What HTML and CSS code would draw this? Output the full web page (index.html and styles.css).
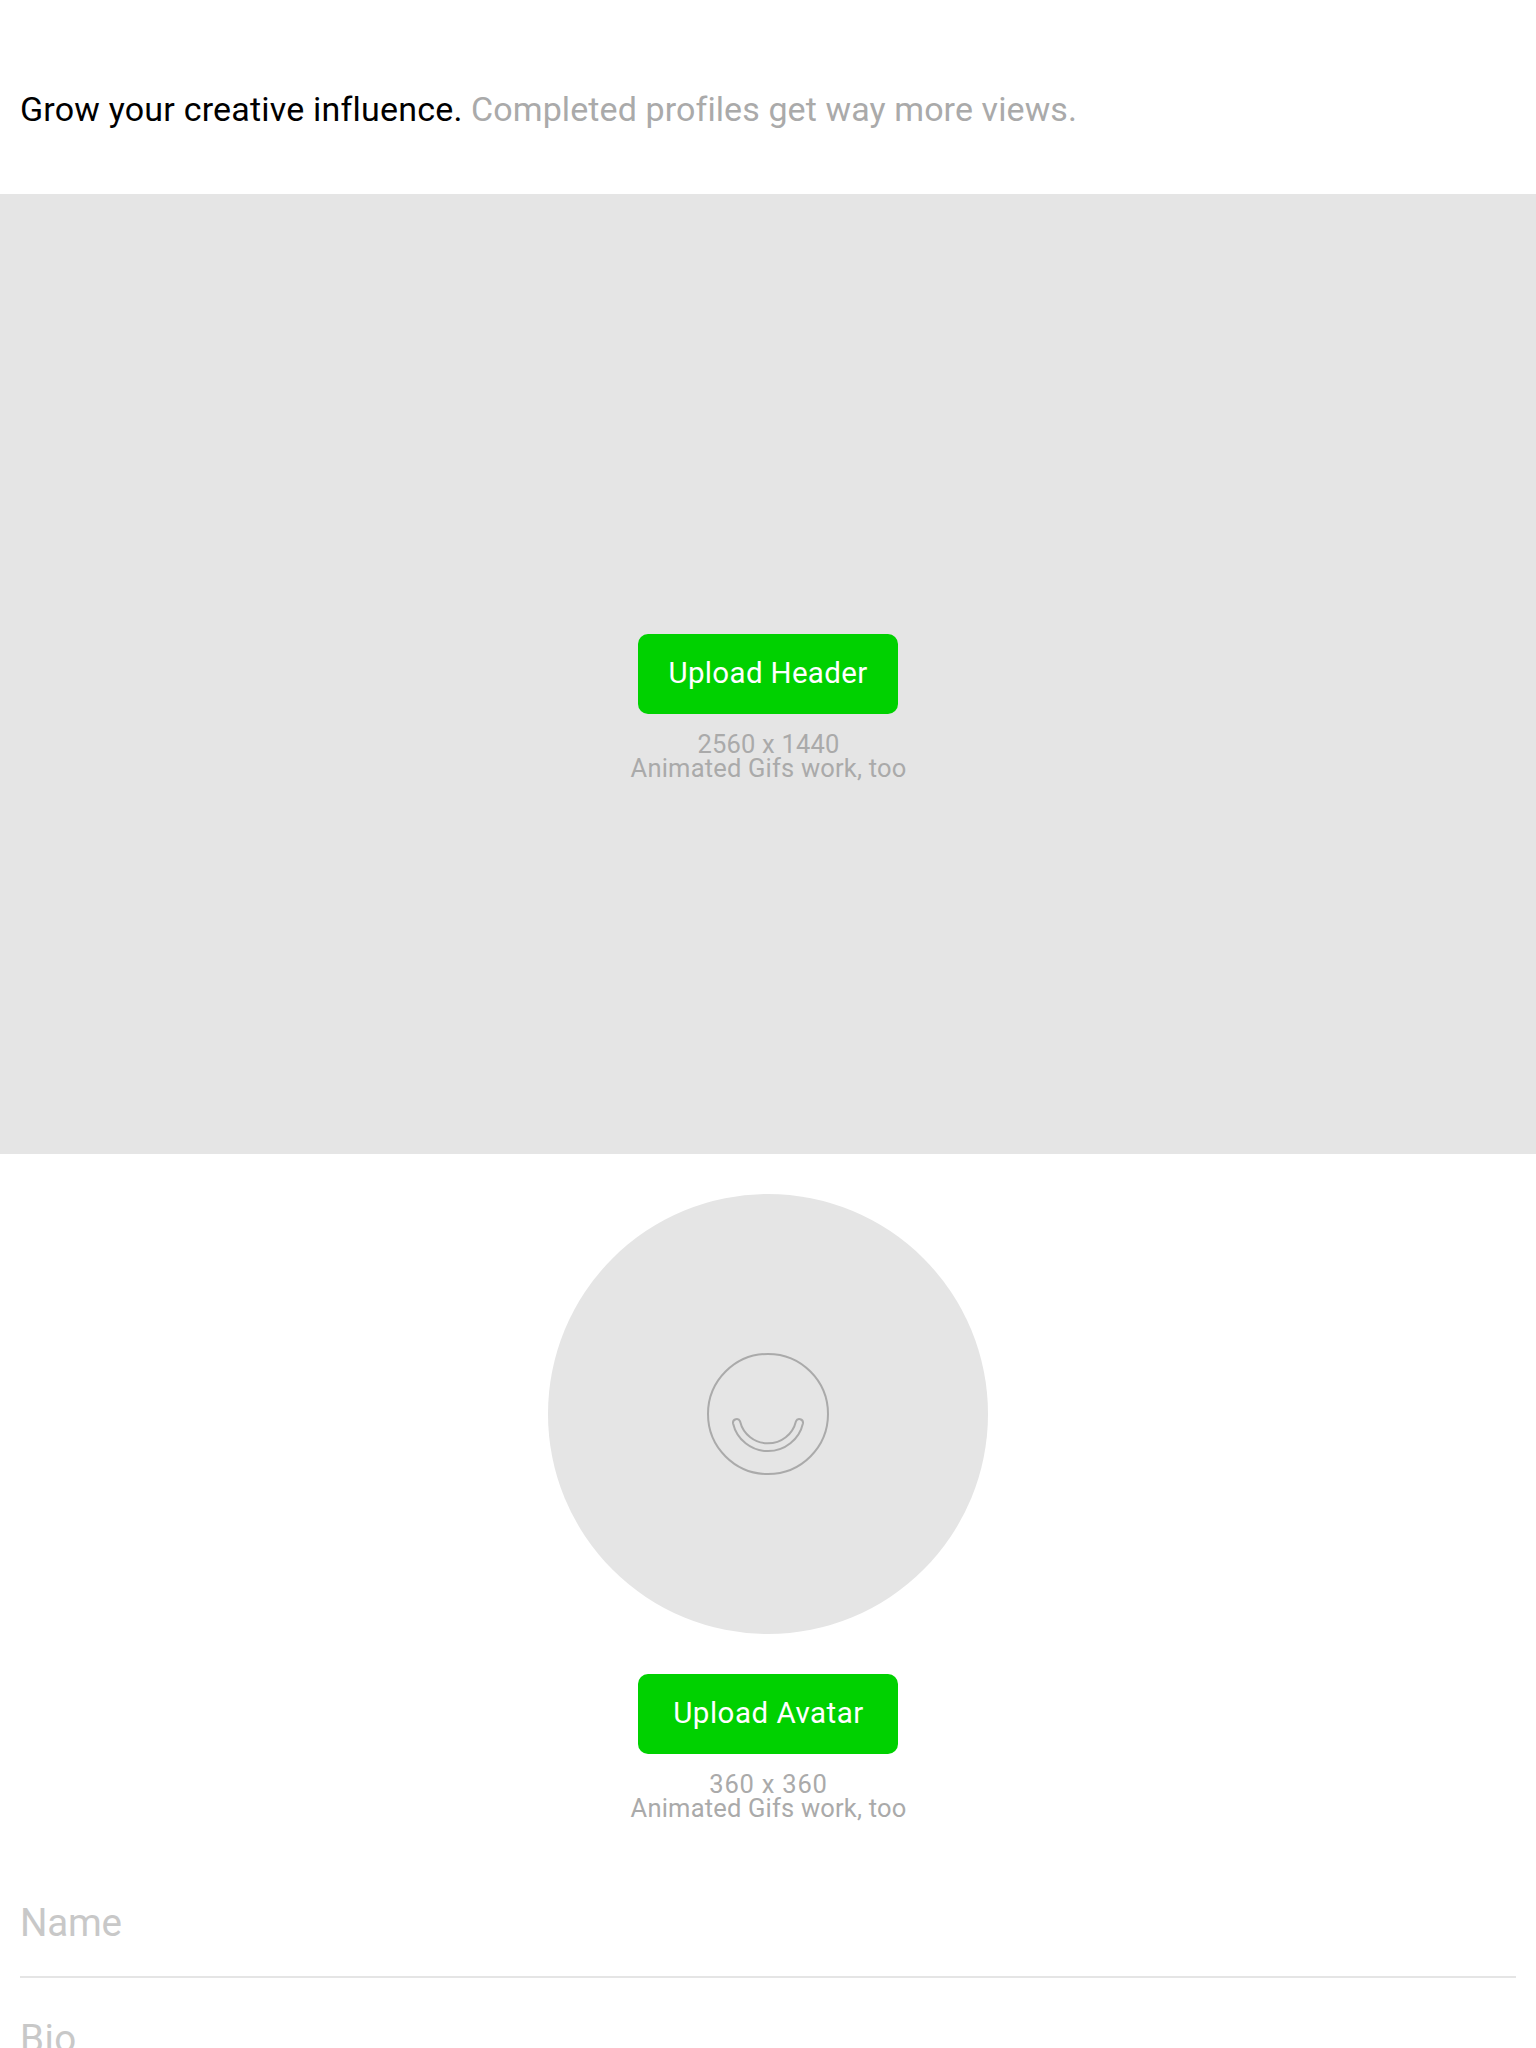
FILE: index.html
```html
<!DOCTYPE html>
<html lang="en">
<head>
<meta charset="utf-8">
<title>Complete your profile</title>
<link rel="stylesheet" href="styles.css">
</head>
<body>
<main class="page">
  <h1 class="intro"><span class="intro-lead">Grow your creative influence.</span> <span class="intro-note">Completed profiles get way more views.</span></h1>
  <section class="cover">
    <button class="upload upload-header" type="button">Upload Header</button>
    <p class="hint"><span class="hint-size">2560 x 1440</span><br>Animated Gifs work, too</p>
  </section>
  <section class="profile">
    <div class="avatar">
      <svg class="face" viewBox="0 0 122 122" aria-hidden="true">
        <circle cx="61" cy="61" r="60"/>
        <path d="M26 70.2A35.9 35.9 0 0 0 96 70.2A3.7 3.7 0 0 0 88.9 68.4A28.7 28.7 0 0 1 33.1 68.4A3.7 3.7 0 0 0 26 70.2Z"/>
      </svg>
    </div>
    <button class="upload upload-avatar" type="button">Upload Avatar</button>
    <p class="hint"><span class="hint-avatar">360 x 360</span><br>Animated Gifs work, too</p>
  </section>
  <div class="fields">
    <div class="field field-name">Name</div>
    <div class="field">Bio</div>
  </div>
</main>
</body>
</html>
```
FILE: styles.css
```css
body {
  margin: 0;
  background: #fff;
  font-family: Roboto, "Liberation Sans", sans-serif;
}

.page {
  height: 2048px;
  overflow: hidden;
}

.intro {
  box-sizing: border-box;
  height: 194px;
  margin: 0;
  padding: 79px 20px 0;
  font-size: 34px;
  font-weight: 400;
  line-height: 60px;
}

.intro-lead {
  color: #000;
  letter-spacing: 0.2px;
}

.intro-note {
  margin-left: 0;
  color: #aaa;
  letter-spacing: 0.1px;
}

.cover,
.profile {
  display: flex;
  flex-direction: column;
  align-items: center;
}

.cover {
  box-sizing: border-box;
  height: 960px;
  padding-top: 440px;
  background: #e5e5e5;
}

.profile {
  padding-top: 40px;
}

.upload {
  box-sizing: border-box;
  width: 260px;
  height: 80px;
  padding: 0 0 2px;
  border: 0;
  border-radius: 10px;
  background: #00d100;
  color: #fff;
  font-family: inherit;
  font-size: 29.5px;
  line-height: 78px;
  text-align: center;
}

.upload-header {
  letter-spacing: 0.33px;
}

.upload-avatar {
  padding-left: 1px;
  letter-spacing: 0.5px;
}

.hint {
  margin: 18px 0 0;
  padding-left: 1px;
  color: #aaa;
  font-size: 25.5px;
  letter-spacing: 0.19px;
  line-height: 24px;
  text-align: center;
}

.hint-size {
  letter-spacing: 0.2px;
}

.hint-avatar {
  letter-spacing: 0.8px;
}

.avatar {
  display: flex;
  align-items: center;
  justify-content: center;
  width: 440px;
  height: 440px;
  margin-bottom: 40px;
  border-radius: 50%;
  background: #e5e5e5;
}

.face {
  width: 122px;
  height: 122px;
  fill: none;
  stroke: #aaa;
  stroke-width: 2;
}

.fields {
  margin: 42px 20px 0;
}

.field {
  box-sizing: border-box;
  height: 116px;
  padding-top: 8px;
  border-bottom: 2px solid #e5e5e5;
  color: #c8c8c8;
  font-size: 38.5px;
  letter-spacing: 0.4px;
  line-height: 106px;
}

.field-name {
  letter-spacing: -0.2px;
}
```
